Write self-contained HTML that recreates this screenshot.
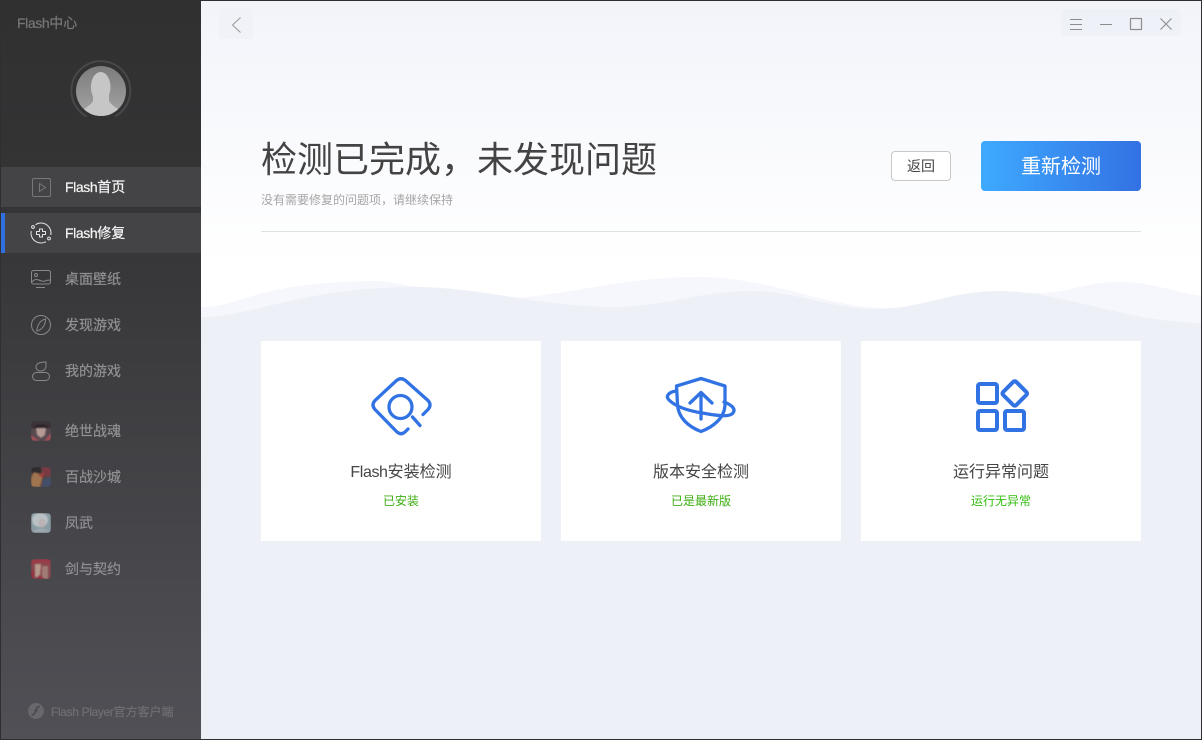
<!DOCTYPE html>
<html lang="zh">
<head>
<meta charset="utf-8">
<title>Flash中心</title>
<style>
html,body{margin:0;padding:0}
body{width:1202px;height:740px;position:relative;overflow:hidden;background:#edf0f7;font-family:"Liberation Sans","Noto Sans CJK SC",sans-serif}
.t{position:absolute;white-space:nowrap;line-height:20px}
#frame{position:absolute;left:0;top:0;width:1200px;height:738px;border:1px solid #2f2f31;pointer-events:none;z-index:9}
#side{position:absolute;left:0;top:0;width:201px;height:740px;background:linear-gradient(180deg,#303030 0%,#353537 30%,#454549 70%,#505056 100%)}
.row{position:absolute;left:1px;width:200px;height:40px;background:#444446}
.nav{font-size:14px;left:65px;color:#919194;-webkit-text-stroke:.2px #919194}
.w{font-size:14px;left:65px;color:#f6f6f6;-webkit-text-stroke:.2px #f6f6f6}
.f{letter-spacing:-.4px}
.sv{position:absolute;overflow:visible}
.card{position:absolute;top:341px;width:280px;height:200px;background:#fff}
.c1{position:absolute;width:280px;left:0;top:121px;text-align:center;font-size:16px;line-height:22px;color:#454545}
.c2{position:absolute;width:280px;left:0;top:151px;text-align:center;font-size:12px;line-height:18px;color:#3dae12}
.gi{position:absolute;left:31px;width:20px;height:20px;border-radius:4px;overflow:hidden;opacity:.92}
.gi svg{filter:blur(.8px);display:block}
</style>
</head>
<body>
<svg class="sv" style="left:201px;top:0" width="1001" height="740" viewBox="201 0 1001 740">
<defs><linearGradient id="bg" x1="0" y1="0" x2="0" y2="1"><stop offset="0" stop-color="#f2f4fa"/><stop offset="1" stop-color="#fff"/></linearGradient></defs>
<rect x="201" y="0" width="1001" height="262" fill="url(#bg)"/>
<rect x="201" y="262" width="1001" height="70" fill="#fff"/>
<path d="M200 307C240 308 250 283 372 281C395 281 405 287 424 287C470 292 500 298 526 297C580 292 630 277 698 277C770 277 830 308 884 308C930 308 985 291 1043 293C1070 292 1085 282 1120 282C1150 282 1175 292 1202 296V340H200Z" fill="#f6f7fc"/>
<path d="M200 317C255 317 300 287 417 287C480 287 540 307 615 307C665 307 700 291 750 291C795 291 830 309 877 309C920 309 950 291 999 291C1060 291 1130 323 1202 323V340H200Z" fill="#edf0f7"/>
<rect x="219" y="9" width="34" height="30" rx="4" fill="#f0f2f8"/>
<rect x="1061" y="9" width="120" height="27" rx="4" fill="#eff1f8"/>
<path d="M240.500 17.500L232.500 25L240.500 32.500" fill="none" stroke="#999" stroke-width="1"/>
<path d="M1070 19.500H1082M1070 24.500H1082M1070 29.500H1082M1100 24.500H1112" fill="none" stroke="#8c8c8c" stroke-width="1"/>
<rect x="1130.500" y="18.500" width="11" height="11" fill="none" stroke="#8c8c8c" stroke-width="1.200"/>
<path d="M1160.500 18.500L1171.500 29.500M1171.500 18.500L1160.500 29.500" fill="none" stroke="#8c8c8c" stroke-width="1.100"/>
<rect x="261" y="231" width="880" height="1" fill="#dfe1e6"/>
</svg>

<div id="side"></div>
<div class="t" style="left:17px;top:13px;font-size:14px;color:#77777a;-webkit-text-stroke:.2px #77777a"><span class="f">Flash</span>中心</div>
<svg class="sv" style="left:70px;top:60px" width="62" height="60" viewBox="70 60 62 60">
<defs>
<linearGradient id="av" x1="0" y1="0" x2="0" y2="1"><stop offset="0" stop-color="#7c7c7c"/><stop offset="1" stop-color="#a4a4a4"/></linearGradient>
<clipPath id="avc"><circle cx="101" cy="91" r="25"/></clipPath>
</defs>
<path d="M86.700 116.500A29.500 29.500 0 1 1 115 116.500" fill="none" stroke="#48484a" stroke-width="2"/>
<circle cx="101" cy="91" r="25" fill="url(#av)"/>
<g clip-path="url(#avc)" fill="#c6c6c6">
<ellipse cx="100.700" cy="87" rx="9.800" ry="15"/>
<path d="M93 95V101C91 105 84 109 78 113V120H124V113C118 109 111 105 109 101V95Z"/>
</g>
</svg>

<div class="row" style="top:167px"></div>
<div class="row" style="top:213px"></div>
<div style="position:absolute;left:1px;top:213px;width:4px;height:40px;background:#2f6fdf"></div>

<svg class="sv" style="left:0;top:0" width="60" height="390" viewBox="0 0 60 390" fill="none" stroke-width="1">
<g stroke="#77777a">
<rect x="32.500" y="178.500" width="18" height="18" rx="1.500"/>
<path d="M39.500 183.500L45.500 187.500L39.500 191.500Z"/>
</g>
<g stroke="#e4e4e4">
<path d="M35.500 224.700A10 10 0 0 1 50.800 235M46 241.700A10 10 0 0 1 31.200 231"/>
<circle cx="33" cy="227" r="1.400"/>
<circle cx="49" cy="238.500" r="1.400"/>
<path d="M39.500 229H42.500V231.500H45.500V234.500H42.500V237H39.500V234.500H36.500V231.500H39.500Z" stroke-linejoin="round"/>
</g>
<g stroke="#88888b">
<rect x="31.500" y="270.500" width="19" height="13.500" rx="2"/>
<circle cx="36" cy="275" r="1.500"/>
<path d="M32 282C37 276 41 283 45 281C47 280 49 280 50.500 280M36 287.500H45"/>
<circle cx="41" cy="325" r="9.500"/>
<path d="M36.800 331C37 325 40.500 320 45.500 319C45.500 325 42 330 36.800 331Z"/>
<path d="M36 367C36 364 39 362 46 362V366C46 369 43.500 371 41 371C38 371 36 369.500 36 367Z"/>
<rect x="32.500" y="372.500" width="17" height="8" rx="4"/>
</g>
</svg>

<div class="t w" style="top:177px"><span class="f">Flash</span>首页</div>
<div class="t w" style="top:223px"><span class="f">Flash</span>修复</div>
<div class="t nav" style="top:269px">桌面壁纸</div>
<div class="t nav" style="top:315px">发现游戏</div>
<div class="t nav" style="top:361px">我的游戏</div>
<div class="t nav" style="top:421px">绝世战魂</div>
<div class="t nav" style="top:467px">百战沙城</div>
<div class="t nav" style="top:513px">凤武</div>
<div class="t nav" style="top:559px">剑与契约</div>

<div class="gi" style="top:421px">
<svg width="20" height="20" viewBox="0 0 20 20"><rect width="20" height="20" fill="#5a4a50"/><path d="M0 0H20V7H0Z" fill="#3c3238"/><path d="M5 7H15L14 14L10 17L6 14Z" fill="#c0a29e"/><path d="M2 8C4 2 16 2 18 8C14 5 7 5 2 8Z" fill="#281f24"/><path d="M0 14L9 20H0ZM20 12V20H13Z" fill="#a85058"/></svg>
</div>
<div class="gi" style="top:467px">
<svg width="20" height="20" viewBox="0 0 20 20"><rect width="20" height="20" fill="#5c4440"/><path d="M0 0H10V6H0Z" fill="#2e2a2c"/><path d="M10 0H20V9H13Z" fill="#7e3a44"/><path d="M3 5L12 8L9 20H0V11Z" fill="#a87a50"/><path d="M12 12L20 10V20H11Z" fill="#44506e"/><path d="M7 8L13 5L12 11Z" fill="#a8403a"/></svg>
</div>
<div class="gi" style="top:513px">
<svg width="20" height="20" viewBox="0 0 20 20"><rect width="20" height="20" fill="#8fa4ac"/><ellipse cx="9" cy="7" rx="8" ry="7" fill="#c4cdd0"/><ellipse cx="11" cy="10" rx="3.500" ry="4.500" fill="#c8bcbc"/><path d="M2 20C4 14 16 14 18 20Z" fill="#a6b2b8"/></svg>
</div>
<div class="gi" style="top:559px">
<svg width="20" height="20" viewBox="0 0 20 20"><rect width="20" height="20" fill="#8e4850"/><path d="M4 5H10L9 18H4Z" fill="#c0a090"/><path d="M11 7H17V20H11Z" fill="#a88078"/><path d="M0 0H20V5C14 3 6 3 0 6Z" fill="#a23c48"/><path d="M0 12H3V20H0ZM8 16L14 20H6Z" fill="#9c3040"/></svg>
</div>

<svg class="sv" style="left:28px;top:703px" width="16" height="16" viewBox="0 0 16 16"><circle cx="8" cy="8" r="8" fill="#68686c"/><path d="M12 3.500C8 3.500 8.500 6 7.500 8.500C6.800 10.500 6 12 3.500 12" fill="none" stroke="#4d4d52" stroke-width="1.800"/><path d="M6 7.500H10" stroke="#4d4d52" stroke-width="1.500"/></svg>
<div class="t" style="left:51px;top:702px;font-size:12px;color:#6e6e72;-webkit-text-stroke:.25px #6e6e72"><span style="letter-spacing:-.35px">Flash Player</span>官方客户端</div>

<div class="t" style="left:261px;top:138px;font-size:36px;line-height:44px;color:#434343">检测已完成，未发现问题</div>
<div class="t" style="left:261px;top:190px;font-size:12px;color:#a5a5a5">没有需要修复的问题项，请继续保持</div>

<div style="position:absolute;left:891px;top:151px;width:58px;height:28px;border:1px solid #c8c8c8;border-radius:4px;background:#fff;text-align:center;line-height:29px;font-size:14px;color:#454545">返回</div>
<div style="position:absolute;left:981px;top:141px;width:160px;height:50px;border-radius:4px;background:linear-gradient(90deg,#3eaaff,#3371e3);text-align:center;line-height:52px;font-size:20px;color:#fff">重新检测</div>

<div class="card" style="left:261px">
<svg class="sv" style="left:100px;top:30px" width="80" height="70" viewBox="361 371 80 70" fill="none" stroke="#3273e4" stroke-width="3.300" stroke-linecap="round" stroke-linejoin="round">
<path d="M423 414.500L428 409.500Q432 405 428 400.500L405.500 380.500Q401 377 396.500 380.500L375 400.500Q371 405 375 409.500L396.500 431.500Q401 436 405.500 431.500L408 429"/>
<circle cx="400.500" cy="407" r="11.500"/>
<path d="M412.500 417L420 425.500"/>
</svg>
<div class="c1"><span class="f">Flash</span>安装检测</div>
<div class="c2">已安装</div>
</div>

<div class="card" style="left:561px">
<svg class="sv" style="left:100px;top:30px" width="80" height="70" viewBox="661 371 80 70" fill="none" stroke="#3273e4" stroke-width="3.300" stroke-linecap="round" stroke-linejoin="round">
<path d="M676.500 386L701 378.500L725 386V404C725 418 713 427 701 431.500C689 427 678 418 677.500 404Z"/>
<path d="M676 391C669 392 665 396 669 400C676 407 690 411 702 413C715 415 729 418 733 413C736 409 732 405 724 402"/>
<path d="M690 403L701 392.500L712 403M701 393V419"/>
</svg>
<div class="c1">版本安全检测</div>
<div class="c2">已是最新版</div>
</div>

<div class="card" style="left:861px">
<svg class="sv" style="left:100px;top:30px" width="80" height="70" viewBox="961 371 80 70" fill="none" stroke="#3273e4" stroke-width="4" stroke-linejoin="round">
<rect x="978" y="384" width="19" height="19" rx="2"/>
<rect x="978" y="411" width="19" height="19" rx="2"/>
<rect x="1005" y="411" width="19" height="19" rx="2"/>
<rect x="1005.500" y="384.200" width="18.500" height="18.500" rx="2" transform="rotate(45 1014.750 393.450)"/>
</svg>
<div class="c1">运行异常问题</div>
<div class="c2" style="color:#35bd12">运行无异常</div>
</div>

<div id="frame"></div>
</body>
</html>
